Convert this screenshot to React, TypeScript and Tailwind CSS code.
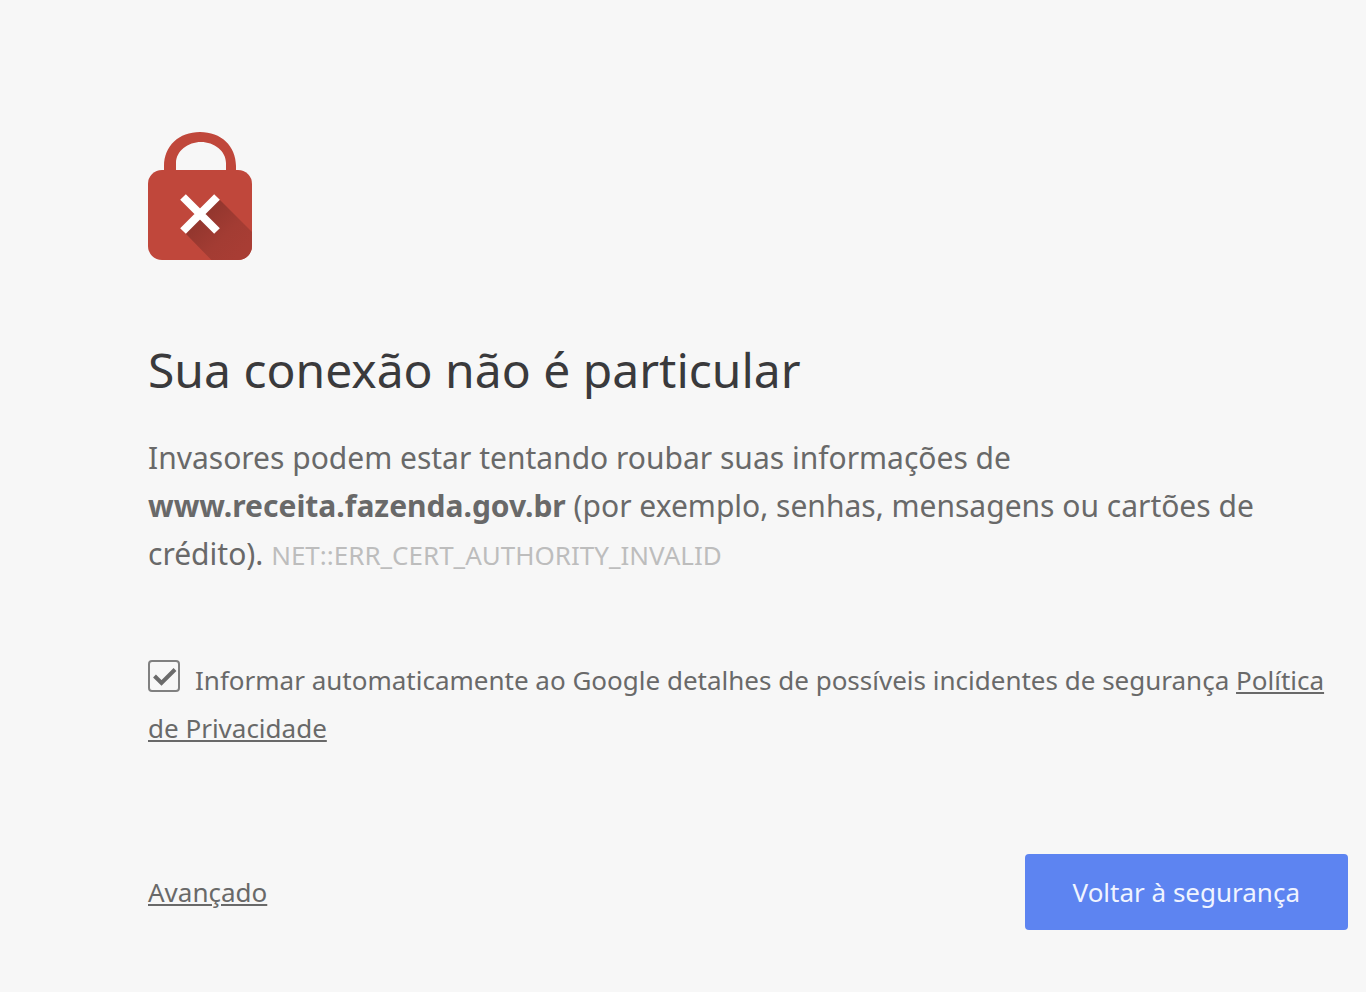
import { useState } from "react";

const LockIcon: React.FC = () => {
  return (
    <svg
      width="104"
      height="128"
      viewBox="0 0 104 128"
      fill="none"
      aria-hidden="true"
    >
      <defs>
        <linearGradient id="shade" x1="50" y1="80" x2="92" y2="122" gradientUnits="userSpaceOnUse">
          <stop offset="0" stopColor="#8f352d" />
          <stop offset="0.6" stopColor="#a33c33" />
          <stop offset="1" stopColor="#a83d34" />
        </linearGradient>
        <clipPath id="body">
          <rect y="38" width="104" height="90" rx="14" />
        </clipPath>
      </defs>
      <path
        d="M16 40V34C16 14 31 0 52 0S88 14 88 34V40H78V31C78 19 66 10 53 10S28 19 28 31V40Z"
        fill="#c0473b"
      />
      <rect y="38" width="104" height="90" rx="14" fill="#c0473b" />
      <path
        d="M72 68L120 116V144H79L38 102L52 82Z"
        fill="url(#shade)"
        clipPath="url(#body)"
      />
      <path d="M35 65L69 99M69 65L35 99" stroke="#fff" strokeWidth="8" />
    </svg>
  );
};

const App: React.FC = () => {
  const [report, setReport] = useState(true);

  return (
    <div className="min-h-screen bg-[#f7f7f7] pl-[148px] pr-[18px] pt-[132px] pb-12 font-['Noto_Sans',sans-serif] text-[#696969]">
      <main className="max-w-[1200px]">
        <LockIcon />
        <h1 className="mt-20 text-5xl leading-[60px] text-[#3a3a3c]">
          Sua conexão não é particular
        </h1>
        <p className="mt-[34px] text-3xl leading-12">
          Invasores podem estar tentando roubar suas informações de{" "}
          <strong className="font-bold">www.receita.fazenda.gov.br</strong> (por
          exemplo, senhas, mensagens ou cartões de crédito).{" "}
          <span className="text-[26px] text-[#bdbdbd]">
            NET::ERR_CERT_AUTHORITY_INVALID
          </span>
        </p>
        <div className="mt-[77px] text-[26px] leading-12">
          <span className="relative mr-[15px] inline-block size-8 align-[-2px]">
            <input
              id="report"
              type="checkbox"
              checked={report}
              onChange={(e) => setReport(e.target.checked)}
              className="peer block size-8 appearance-none rounded-[4px] border-2 border-[#808080]"
            />
            <svg
              className="pointer-events-none absolute inset-0 hidden peer-checked:block"
              viewBox="0 0 32 32"
              fill="none"
              aria-hidden="true"
            >
              <path d="M6.500 16L13.500 23L27 9.500" stroke="#6b6b6b" strokeWidth="4" />
            </svg>
          </span>
          <label htmlFor="report">
            Informar automaticamente ao Google detalhes de possíveis incidentes
            de segurança
          </label>{" "}
          <a href="#privacidade" className="underline">
            Política de Privacidade
          </a>
        </div>
        <div className="mt-[102px] flex items-center justify-between">
          <button type="button" className="text-[26px] underline">
            Avançado
          </button>
          <button
            type="button"
            className="h-[76px] rounded-sm bg-[#5d84f1] px-12 text-[26px] text-[#f0f4ff]"
          >
            Voltar à segurança
          </button>
        </div>
      </main>
    </div>
  );
};

export default App;
